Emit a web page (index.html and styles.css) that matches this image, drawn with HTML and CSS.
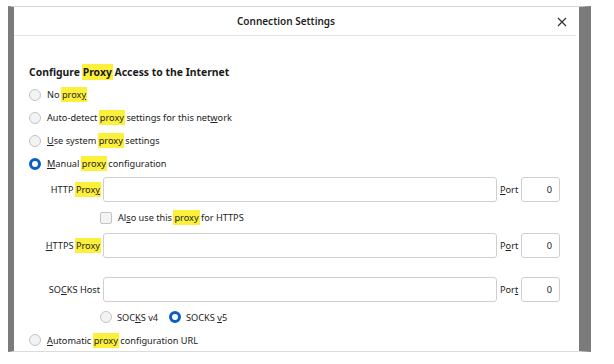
FILE: index.html
```html
<!DOCTYPE html>
<html>
<head>
<meta charset="utf-8">
<link rel="stylesheet" href="styles.css">
</head>
<body>
<div class="screen">
  <div class="dialog">
    <div class="header">
      <span class="title">Connection Settings</span>
      <span class="close"><svg width="10" height="10" viewBox="0 0 10 10"><path d="M1 1L9 9M9 1L1 9" stroke="#333" stroke-width="1.2" fill="none"/></svg></span>
    </div>
    <div class="content">
      <div class="heading">Configure <mark>Proxy</mark> Access to the Internet</div>
      <div class="option"><span class="radio"></span><span>No <mark>prox<u>y</u></mark></span></div>
      <div class="option"><span class="radio"></span><span>Auto-detect <mark>proxy</mark> settings for this net<u>w</u>ork</span></div>
      <div class="option"><span class="radio"></span><span><u>U</u>se system <mark>proxy</mark> settings</span></div>
      <div class="option"><span class="radio checked"></span><span><u>M</u>anual <mark>proxy</mark> configuration</span></div>
      <div class="manual">
        <div class="field-row">
          <span class="label">HTTP <mark>Prox<u>y</u></mark></span>
          <span class="input host"></span>
          <span class="port-label"><u>P</u>ort</span>
          <span class="input port">0</span>
        </div>
        <div class="check-row"><span class="checkbox"></span><span>Al<u>s</u>o use this <mark>proxy</mark> for HTTPS</span></div>
        <div class="field-row">
          <span class="label"><u>H</u>TTPS <mark>Proxy</mark></span>
          <span class="input host"></span>
          <span class="port-label">P<u>o</u>rt</span>
          <span class="input port">0</span>
        </div>
        <div class="field-row socks">
          <span class="label">SO<u>C</u>KS Host</span>
          <span class="input host"></span>
          <span class="port-label">Por<u>t</u></span>
          <span class="input port">0</span>
        </div>
        <div class="socks-row">
          <span class="socks-opt"><span class="radio"></span><span>SOC<u>K</u>S v4</span></span>
          <span class="socks-opt"><span class="radio checked"></span><span>SOCKS <u>v</u>5</span></span>
        </div>
      </div>
      <div class="option last"><span class="radio"></span><span><u>A</u>utomatic <mark>proxy</mark> configuration URL</span></div>
    </div>
  </div>
</div>
</body>
</html>
```

FILE: styles.css
```css
html, body {
  margin: 0;
  padding: 0;
  background: #ffffff;
}
body {
  font-family: "Noto Sans", "Open Sans", sans-serif;
  color: #222;
  font-size: 9.2px;
}
.screen {
  padding-top: 6px;
  padding-left: 8px;
  width: 583px;
}
.dialog {
  border-top: 1px solid #d6d6d6;
  border-left: 6px solid #7b7b7b;
  border-right: 12px solid #7b7b7b;
  border-bottom: 1px solid #dcdcdc;
  background: #fff;
  height: 346px;
  box-sizing: border-box;
}
.header {
  height: 28px;
  border-bottom: 1px solid #e4e4e4;
  margin-right: 3px;
  display: flex;
  align-items: center;
  position: relative;
}
.title {
  flex: 1;
  text-align: center;
  font-weight: 600;
  font-size: 10px;
  padding-right: 18px;
  color: #1f1f1f;
}
.close {
  position: absolute;
  right: 9px;
  top: 10px;
  width: 10px;
  height: 10px;
  display: flex;
}
.content {
  padding-left: 15px;
  padding-top: 25px;
}
mark {
  background: #fdf03a;
  color: inherit;
  padding: 1px 1px;
  margin: 0 -1px;
}
u {
  text-decoration-thickness: 1px;
  text-underline-offset: 1px;
}
.heading {
  font-weight: 700;
  font-size: 10.4px;
  height: 22px;
  line-height: 22px;
  color: #1a1a1a;
}
.option {
  height: 23px;
  display: flex;
  align-items: center;
  gap: 6px;
}
.option.last {
  height: 16px;
}
.radio {
  width: 10px;
  height: 10px;
  border-radius: 50%;
  border: 1px solid #c4c4c4;
  background: #f3f3f3;
  flex: none;
}
.radio.checked {
  width: 6px;
  height: 6px;
  border: 3px solid #0a5fc4;
  background: #fff;
}
.manual {
  padding-top: 2px;
}
.field-row {
  display: flex;
  align-items: center;
  height: 25px;
}
.field-row.socks {
  margin-top: 19px;
}
.label {
  width: 71px;
  text-align: right;
  flex: none;
}
.input {
  height: 25px;
  box-sizing: border-box;
  border: 1px solid #cfcfcf;
  border-radius: 3px;
  background: #fff;
}
.host {
  width: 394px;
  margin-left: 3px;
}
.port-label {
  margin-left: 3px;
  width: 18px;
}
.port {
  width: 39px;
  margin-left: 3px;
  text-align: right;
  padding-right: 7px;
  line-height: 23px;
}
.check-row {
  height: 31px;
  display: flex;
  align-items: center;
  gap: 6px;
  padding-left: 71px;
}
.checkbox {
  width: 10px;
  height: 10px;
  border: 1px solid #c4c4c4;
  border-radius: 2px;
  background: #f3f3f3;
}
.socks-row {
  height: 30px;
  display: flex;
  align-items: center;
  padding-left: 71px;
  gap: 11px;
}
.socks-opt {
  display: flex;
  align-items: center;
  gap: 5px;
}
```
